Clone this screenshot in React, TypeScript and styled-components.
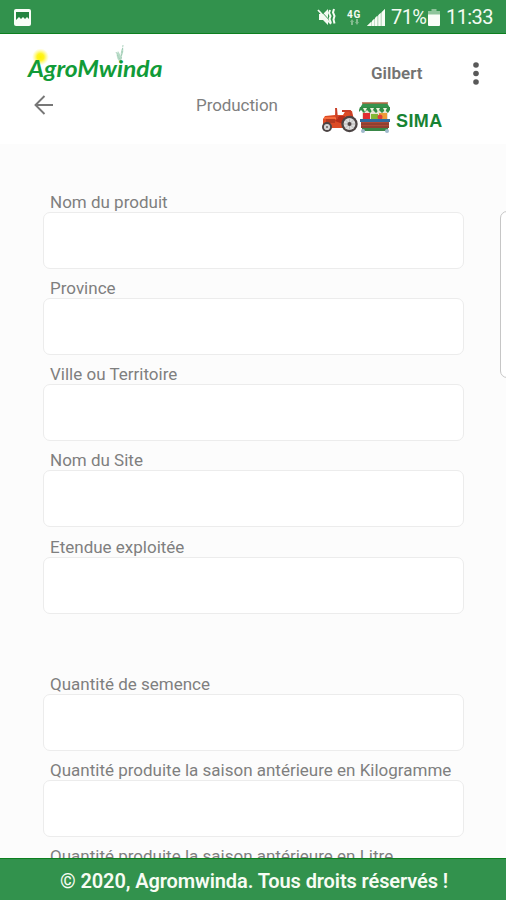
import React from "react";
import styled, { createGlobalStyle } from "styled-components";

const GlobalStyle = createGlobalStyle`
  *, *::before, *::after { box-sizing: border-box; }
  body { margin: 0; overflow: hidden; background: #fcfcfc; }
`;

const Screen = styled.div`
  position: relative;
  display: flex;
  flex-direction: column;
  width: 506px;
  height: 900px;
  overflow: hidden;
  background: #fcfcfc;
  color: #7f7f7f;
  font-family: Roboto, "Liberation Sans", sans-serif;
`;

const StatusBar = styled.div`
  flex: none;
  display: flex;
  align-items: center;
  justify-content: space-between;
  height: 34px;
  padding: 1px 14px 0;
  background: #32924d;
  border-bottom: 1px solid #0d801f;
  color: #f4fbf2;
`;

const StatusGroup = styled.div`
  display: flex;
  align-items: center;
`;

const StatusText = styled.span<{ $width: number }>`
  width: ${(p) => p.$width}px;
  padding-left: 6px;
  font-size: 20px;
  line-height: 24px;
  letter-spacing: -0.6px;
  white-space: nowrap;
`;

const Network = styled.div`
  display: flex;
  flex-direction: column;
  align-items: center;
  width: 16px;
  margin: 0 5px 0 9px;
  font-size: 10px;
  font-weight: 700;
  line-height: 9px;
  letter-spacing: 0.6px;
`;

const Header = styled.header`
  flex: none;
  display: grid;
  grid-template-columns: 169px 125px 143px 1fr;
  height: 110px;
  padding-left: 27px;
  background: #fff;
`;

const Column = styled.div<{ $top: number }>`
  display: flex;
  flex-direction: column;
  align-items: flex-start;
  padding-top: ${(p) => p.$top}px;
`;

const Logo = styled.svg`
  display: block;
  width: 140px;
  height: 44px;
  overflow: visible;
`;

const BackButton = styled.button`
  display: flex;
  margin: 7px 0 0 7px;
  padding: 0;
  border: 0;
  background: none;
`;

const MenuButton = styled.button`
  display: flex;
  margin-left: 8px;
  padding: 0;
  border: 0;
  background: none;
`;

const Title = styled.span`
  font-size: 17px;
  line-height: 22px;
  letter-spacing: -0.08px;
`;

const UserName = styled.span`
  margin-left: 50px;
  font-size: 17px;
  font-weight: 600;
  line-height: 22px;
  color: #737373;
`;

const Sima = styled.div`
  display: flex;
  align-items: flex-start;
  margin-top: 18px;
  color: #178333;
  font: 700 18px/22px "Liberation Sans", Arial, sans-serif;
  letter-spacing: 0.4px;

  svg + svg { margin-left: 1px; }
  span { margin: 8px 0 0 5px; }
`;

const Form = styled.main`
  flex: 1;
  min-height: 0;
  overflow: hidden;
  padding: 46.5px 42px 0 43px;
`;

const FieldGroup = styled.section<{ $gap?: number }>`
  display: flex;
  flex-direction: column;
  gap: 8.3px;
  margin-top: ${(p) => p.$gap ?? 0}px;
`;

const Field = styled.label`
  display: flex;
  flex-direction: column;
  height: 78px;
`;

const Label = styled.span`
  flex: none;
  height: 21px;
  padding-left: 7px;
  font-size: 17px;
  line-height: 22px;
  white-space: nowrap;
`;

const Input = styled.input`
  flex: none;
  width: 421px;
  height: 57px;
  padding: 0 12px;
  border: 1px solid #ececec;
  border-radius: 7px;
  background: #fff;
  outline: none;
`;

const Footer = styled.footer`
  flex: none;
  display: flex;
  align-items: center;
  justify-content: center;
  height: 42px;
  padding: 2px 0 0 2px;
  border-top: 1px solid #0d801f;
  background: #32924d;
  color: #f7fcf3;
  font-size: 20px;
  font-weight: 600;
  letter-spacing: -0.1px;
  white-space: nowrap;
`;

const EdgePanel = styled.div`
  position: absolute;
  top: 211px;
  right: -8px;
  width: 14px;
  height: 167px;
  border: 1px solid #c6c6c6;
  border-radius: 7px;
  background: #fff;
`;

const PictureIcon = () => (
  <svg width="17" height="17" viewBox="0 0 17 17">
    <rect width="17" height="17" rx="2" fill="#fafdf8" />
    <path d="M2 3h13v7l-2-2-2 2-2-2-2 2-2-2-3 3z" fill="#258440" />
  </svg>
);

const MuteIcon = () => (
  <svg width="20" height="18" viewBox="0 0 20 18" fill="none" stroke="#f4fbf2">
    <path d="M2 6h4l5-5v16l-5-5H2z" fill="#f4fbf2" stroke="none" />
    <path d="M2 1l13 14" stroke="#32924d" strokeWidth="1" />
    <path d="M1 2l13 14" strokeWidth="1.8" />
    <path d="M13 2l-1 3 1.500 3-1 3 1.500 4M17 1l-1 3.500 1.500 3.500-1 3.500 1 4" strokeWidth="2" />
  </svg>
);

const SignalIcon = () => (
  <svg width="18" height="17" viewBox="0 0 18 17">
    <path d="M0 17L18 0v17z" fill="#c5dfc8" />
    <path d="M0 17l4-4v4zM5 17v-5l2-2v7zM8 17V9l2-2v10zM11.500 17V6l2-2v13zM15 17V3l3-3v17z" fill="#f7fcf5" />
  </svg>
);

const BatteryIcon = () => (
  <svg width="12" height="17" viewBox="0 0 12 17">
    <path d="M3.500 0h5v2H12v4H0V2h3.500z" fill="#8fc49b" />
    <path d="M0 5.500h12V16q0 1-1 1H1q-1 0-1-1z" fill="#fafdf8" />
  </svg>
);

const BrandLogo = () => (
  <Logo viewBox="0 0 140 44">
    <defs>
      <radialGradient id="sun">
        <stop offset="0" stopColor="#fff200" />
        <stop offset=".4" stopColor="#fff421" />
        <stop offset="1" stopColor="#fff86a" stopOpacity="0" />
      </radialGradient>
    </defs>
    <circle cx="13.500" cy="13" r="8.500" fill="url(#sun)" />
    <path d="M92 17q-4-5-1-10l3 5q-1-5 2-9 1 5-1 8l-1 7z" fill="#b9dcc8" />
    <path d="M96 1l-2 15M89 8l4 8" stroke="#9bc8b0" strokeWidth=".8" strokeDasharray="2 1" />
    <text
      x="1"
      y="33"
      textLength="134.500"
      lengthAdjust="spacingAndGlyphs"
      fill="#119b38"
      fontFamily='Lato, "Open Sans", sans-serif'
      fontSize="22.500"
      fontStyle="italic"
      fontWeight="700"
    >
      AgroMwinda
    </text>
  </Logo>
);

const ArrowIcon = () => (
  <svg width="20" height="20" viewBox="0 0 20 20" fill="none" stroke="#777" strokeWidth="1.9">
    <path d="M10.500 1L1.500 10l9 9M2 10h17" />
  </svg>
);

const TractorIcon = () => (
  <svg width="37" height="32" viewBox="0 0 37 32">
    <path d="M2 17l2-3 10-1 1-7 1 7h6l3-5 6 1 2 9-4 8H2z" fill="#dc4b25" />
    <path d="M3 16h11l6 3" stroke="#ff7744" strokeWidth="1.500" fill="none" />
    <path d="M14 19l4-5h6l-2 8z" fill="#b52d19" />
    <path d="M15 6l1 11M21 9h8l2 6" stroke="#c84029" strokeWidth="2" fill="none" />
    <path d="M5 18h9M5 20h9" stroke="#8e2b1c" />
    <circle cx="6" cy="25" r="5" fill="#4c4444" />
    <circle cx="6" cy="25" r="3.100" fill="#d6d6d6" />
    <circle cx="6" cy="25" r="1" fill="#665c5c" />
    <circle cx="28.500" cy="22" r="8.200" fill="#4c4444" />
    <circle cx="28.500" cy="22" r="5.900" fill="#dedede" />
    <path d="M23 22h11M28.500 16.500v11M24.500 18l8 8M32.500 18l-8 8" stroke="#aaa" strokeWidth=".7" />
    <circle cx="28.500" cy="22" r="2" fill="#514747" />
  </svg>
);

const StallIcon = () => (
  <svg width="32" height="32" viewBox="0 0 32 32">
    <path d="M3 7h26v22H3z" fill="#e9e4d4" />
    <path d="M4 1h24l3 5H1z" fill="#36934d" />
    <path d="M3 1h26" stroke="#b56745" strokeWidth="1.500" />
    <path d="M1 5h30v3l-2 3-3-3-3 3-3-3-3 3-3-3-3 3-3-3-3 3-3-3-3 3z" fill="#318c45" />
    <path d="M4 6l2 4 2-4zM11 6l2 4 2-4zM17 6l2 4 2-4zM24 6l2 4 2-4z" fill="#edf4dc" />
    <path d="M4 11h7v6H4z" fill="#df2e30" />
    <path d="M12 12h7v5h-7z" fill="#83b735" />
    <path d="M20 11h8v6h-8z" fill="#ed9b36" />
    <circle cx="21" cy="15" r="2.500" fill="#db4037" />
    <path d="M1 17h30v3H1z" fill="#2f6a9e" />
    <path d="M2 20h28v6H2z" fill="#ad4836" />
    <path d="M2 22h28M2 25h28" stroke="#71382d" />
    <path d="M3 26h26v3H3z" fill="#398747" />
    <circle cx="4" cy="29" r="2" fill="#9fb8cb" />
    <circle cx="28" cy="29" r="2" fill="#9fb8cb" />
  </svg>
);

const MenuIcon = () => (
  <svg width="8" height="24" viewBox="0 0 8 24" fill="#595959">
    <circle cx="4" cy="3" r="2.800" />
    <circle cx="4" cy="11.500" r="2.800" />
    <circle cx="4" cy="20" r="2.800" />
  </svg>
);

const plotFields = ["Nom du produit", "Province", "Ville ou Territoire", "Nom du Site", "Etendue exploitée"];
const quantityFields = [
  "Quantité de semence",
  "Quantité produite la saison antérieure en Kilogramme",
  "Quantité produite la saison antérieure en Litre",
];

const FormField = ({ name }: { name: string }) => (
  <Field>
    <Label>{name}</Label>
    <Input />
  </Field>
);

export default function App() {
  return (
    <Screen>
      <GlobalStyle />
      <StatusBar>
        <PictureIcon />
        <StatusGroup>
          <MuteIcon />
          <Network>
            <span>4G</span>
            <svg width="11" height="6" viewBox="0 0 11 6" fill="#83bb8f">
              <path d="M1 3l2-3 2 3H4v3H2V3zM7 0h2v3h1L8 6 6 3h1z" />
            </svg>
          </Network>
          <SignalIcon />
          <StatusText $width={43}>71%</StatusText>
          <BatteryIcon />
          <StatusText $width={52}>11:33</StatusText>
        </StatusGroup>
      </StatusBar>
      <Header>
        <Column $top={10}>
          <BrandLogo />
          <BackButton aria-label="Retour">
            <ArrowIcon />
          </BackButton>
        </Column>
        <Column $top={60}>
          <Title>Production</Title>
        </Column>
        <Column $top={28}>
          <UserName>Gilbert</UserName>
          <Sima>
            <TractorIcon />
            <StallIcon />
            <span>SIMA</span>
          </Sima>
        </Column>
        <Column $top={28}>
          <MenuButton aria-label="Menu">
            <MenuIcon />
          </MenuButton>
        </Column>
      </Header>
      <Form>
        <FieldGroup>
          {plotFields.map((name) => <FormField key={name} name={name} />)}
        </FieldGroup>
        <FieldGroup $gap={59}>
          {quantityFields.map((name) => <FormField key={name} name={name} />)}
        </FieldGroup>
      </Form>
      <Footer>© 2020, Agromwinda. Tous droits réservés !</Footer>
      <EdgePanel />
    </Screen>
  );
}
